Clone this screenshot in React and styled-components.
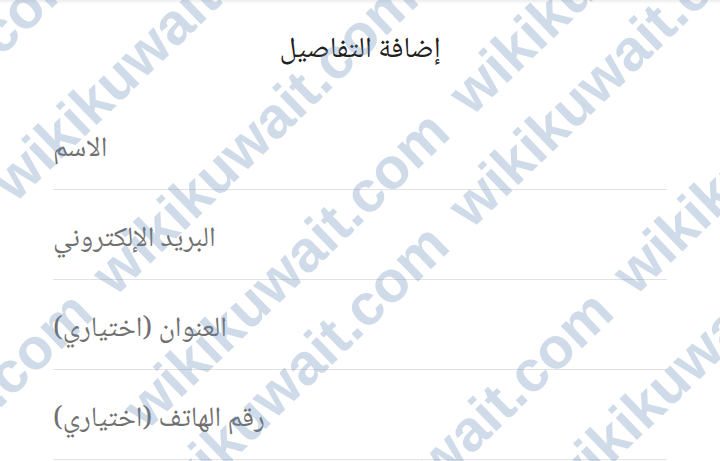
import React from "react";
import styled, { createGlobalStyle } from "styled-components";

const GlobalStyle = createGlobalStyle`
  html, body { margin: 0; padding: 0; background: #ffffff; }
  body { width: 720px; height: 461px; overflow: hidden; }
  * { box-sizing: border-box; }
`;

const Page = styled.div`
  position: relative;
  width: 720px;
  height: 461px;
  overflow: hidden;
  background: #ffffff;
  font-family: "Noto Naskh Arabic", "Noto Sans Arabic", "DejaVu Sans", sans-serif;
`;

const TopShade = styled.div`
  height: 4px;
  background: linear-gradient(rgba(0, 0, 0, 0.07), rgba(0, 0, 0, 0));
`;

const Header = styled.header`
  height: 96px;
  padding-top: 27px;
  display: flex;
  justify-content: center;
`;

const Title = styled.h1`
  margin: 0;
  font-size: 29px;
  line-height: 40px;
  font-weight: 400;
  color: #202020;
  direction: rtl;
`;

const Form = styled.div`
  padding: 0 53px;
  display: flex;
  flex-direction: column;
`;

const FieldRow = styled.div`
  height: 90px;
  padding-top: 32px;
  border-bottom: 1px solid #e2e2e2;
  display: flex;
  justify-content: flex-start;
`;

const Hint = styled.span`
  direction: rtl;
  font-size: 28px;
  line-height: 36px;
  color: #707070;
`;

const Watermark = styled.div`
  position: absolute;
  inset: 0;
  overflow: hidden;
  pointer-events: none;
  z-index: 2;
`;

const Rotator = styled.div`
  position: absolute;
  left: 0;
  top: 0;
  width: 0;
  height: 0;
  transform-origin: 0 0;
  transform: rotate(-${(p) => p.$angle}deg);
`;

const MarkWord = styled.span`
  position: absolute;
  font-family: "Liberation Sans", Arial, sans-serif;
  font-weight: 700;
  font-size: ${(p) => p.$size}px;
  line-height: 1;
  white-space: nowrap;
  color: rgba(100, 140, 180, 0.31);
`;

const fields = [
  "الاسم",
  "البريد الإلكتروني",
  "العنوان (اختياري)",
  "رقم الهاتف (اختياري)",
];

const WM_SIZE = 58;
const WM_BASE = 49; // baseline offset from top of the word box
// [along-strip offset, baseline offset across strips] in the rotated frame
const marks = [
  [-346, 42],
  [-131, 157],
  [-576, 294],
  [-124, 294],
  [-194, 412],
  [258, 412],
  [-273, 493],
  [179, 493],
  [-201, 655],
  [251, 655],
  [55, 759],
];

export default function App() {
  return (
    <>
      <GlobalStyle />
      <Page>
        <TopShade />
        <Header>
          <Title>إضافة التفاصيل</Title>
        </Header>
        <Form>
          {fields.map((f) => (
            <FieldRow key={f}>
              <Hint>{f}</Hint>
            </FieldRow>
          ))}
        </Form>
        <Watermark aria-hidden="true">
          <Rotator $angle={44}>
            {marks.map(([s, p], i) => (
              <MarkWord
                key={i}
                $size={WM_SIZE}
                style={{ left: s, top: p - WM_BASE }}
              >
                wikikuwait.com
              </MarkWord>
            ))}
          </Rotator>
        </Watermark>
      </Page>
    </>
  );
}
